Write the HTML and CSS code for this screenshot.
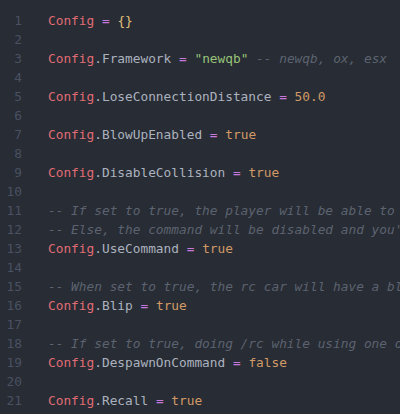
FILE: index.html
```html
<!DOCTYPE html>
<html>
<head>
<meta charset="utf-8">
<link rel="stylesheet" href="styles.css">
</head>
<body>
<div class="editor">
  <div class="line"><span class="ln">1</span><span class="code"><span class="v">Config</span> <span class="op">=</span> <span class="br">{}</span></span></div>
  <div class="line"><span class="ln">2</span><span class="code"></span></div>
  <div class="line"><span class="ln">3</span><span class="code"><span class="v">Config</span><span class="p">.Framework</span> <span class="op">=</span> <span class="s">"newqb"</span> <span class="c">-- newqb, ox, esx</span></span></div>
  <div class="line"><span class="ln">4</span><span class="code"></span></div>
  <div class="line"><span class="ln">5</span><span class="code"><span class="v">Config</span><span class="p">.LoseConnectionDistance</span> <span class="op">=</span> <span class="n">50.0</span></span></div>
  <div class="line"><span class="ln">6</span><span class="code"></span></div>
  <div class="line"><span class="ln">7</span><span class="code"><span class="v">Config</span><span class="p">.BlowUpEnabled</span> <span class="op">=</span> <span class="n">true</span></span></div>
  <div class="line"><span class="ln">8</span><span class="code"></span></div>
  <div class="line"><span class="ln">9</span><span class="code"><span class="v">Config</span><span class="p">.DisableCollision</span> <span class="op">=</span> <span class="n">true</span></span></div>
  <div class="line"><span class="ln">10</span><span class="code"></span></div>
  <div class="line"><span class="ln">11</span><span class="code"><span class="c">-- If set to true, the player will be able to use the /rc command</span></span></div>
  <div class="line"><span class="ln">12</span><span class="code"><span class="c">-- Else, the command will be disabled and you'll need to use the item</span></span></div>
  <div class="line"><span class="ln">13</span><span class="code"><span class="v">Config</span><span class="p">.UseCommand</span> <span class="op">=</span> <span class="n">true</span></span></div>
  <div class="line"><span class="ln">14</span><span class="code"></span></div>
  <div class="line"><span class="ln">15</span><span class="code"><span class="c">-- When set to true, the rc car will have a blip on the map</span></span></div>
  <div class="line"><span class="ln">16</span><span class="code"><span class="v">Config</span><span class="p">.Blip</span> <span class="op">=</span> <span class="n">true</span></span></div>
  <div class="line"><span class="ln">17</span><span class="code"></span></div>
  <div class="line"><span class="ln">18</span><span class="code"><span class="c">-- If set to true, doing /rc while using one of the cars will despawn it</span></span></div>
  <div class="line"><span class="ln">19</span><span class="code"><span class="v">Config</span><span class="p">.DespawnOnCommand</span> <span class="op">=</span> <span class="n">false</span></span></div>
  <div class="line"><span class="ln">20</span><span class="code"></span></div>
  <div class="line"><span class="ln">21</span><span class="code"><span class="v">Config</span><span class="p">.Recall</span> <span class="op">=</span> <span class="n">true</span></span></div>
</div>
</body>
</html>
```

FILE: styles.css
```css
html, body {
  margin: 0;
  padding: 0;
  background: #282c34;
}
.editor {
  width: 400px;
  height: 414px;
  overflow: hidden;
  padding-top: 11px;
  box-sizing: border-box;
  font-family: "DejaVu Sans Mono", monospace;
  font-size: 12.8px;
  color: #abb2bf;
}
.line {
  display: flex;
  height: 19px;
  line-height: 19px;
  white-space: pre;
}
.ln {
  flex: 0 0 22px;
  text-align: right;
  color: #495162;
}
.code {
  margin-left: 26px;
  white-space: pre;
}
.v { color: #e06c75; }
.p { color: #abb2bf; }
.op { color: #c678dd; }
.br { color: #e5c07b; }
.s { color: #98c379; }
.n { color: #d19a66; }
.c { color: #5c6370; font-style: italic; }
```
